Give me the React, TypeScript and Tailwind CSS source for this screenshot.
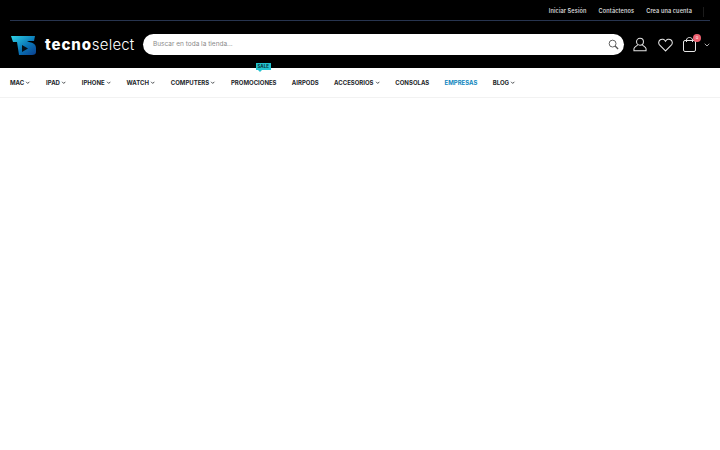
import React from 'react';
import { ChevronDown } from 'lucide-react';

const navItems = [
  { label: 'MAC', arrow: true },
  { label: 'IPAD', arrow: true },
  { label: 'IPHONE', arrow: true },
  { label: 'WATCH', arrow: true },
  { label: 'COMPUTERS', arrow: true },
  { label: 'PROMOCIONES', sale: true },
  { label: 'AIRPODS' },
  { label: 'ACCESORIOS', arrow: true },
  { label: 'CONSOLAS' },
  { label: 'EMPRESAS', active: true },
  { label: 'BLOG', arrow: true },
];

const Logo = () => (
  <svg className="shrink-0" width="27" height="20" viewBox="0 0 27 20">
    <defs>
      <linearGradient id="logoGrad" x1="0" y1="0" x2="1" y2="1">
        <stop offset="0" stopColor="#2fd3e6" />
        <stop offset="0.55" stopColor="#0a78b8" />
        <stop offset="1" stopColor="#0b3f8f" />
      </linearGradient>
    </defs>
    <path d="M1 1 H25 L24 6 H17 L19 7 Q26 8 26 13 V17 Q26 20 22 20 H9 L7 7 H3 Z" fill="url(#logoGrad)" />
    <path d="M12 10 L18 13.5 L12 17 Z" fill="#041018" />
  </svg>
);

const App: React.FC = () => {
  return (
    <div className="min-h-[450px] bg-white font-['Inter',sans-serif]">
      {/* Header */}
      <header className="h-[68px] bg-black px-[10px]">
        <div className="flex h-[21px] items-center justify-end border-b border-[#27344f] pt-[3px] text-[5.6px] font-semibold text-[#d8d8d8]">
          <span className="tracking-[0.1px]">Iniciar Sesión</span>
          <span className="ml-3 tracking-[0.1px]">Contáctenos</span>
          <span className="ml-3 tracking-[0.1px]">Crea una cuenta</span>
          <span className="ml-[11px] mr-[6px] h-[10px] w-px bg-[#1c1c1c]" />
        </div>
        <div className="mt-[13px] -mr-px flex h-[21px] items-center">
          <Logo />
          <div className="ml-2 flex w-[90px] shrink-0 items-baseline text-[15px] leading-none text-white">
            <span className="font-extrabold tracking-[0.9px]">tecno</span>
            <span className="font-light tracking-[0.2px]">select</span>
          </div>
          <div className="ml-2 flex h-[21px] w-[481px] shrink-0 items-center justify-between rounded-full bg-white pl-[10px] pr-[5px]">
            <span className="text-[6.5px] text-[#8a8a8a]">Buscar en toda la tienda...</span>
            <svg width="11" height="11" viewBox="0 0 24 24" fill="none" stroke="#555" strokeWidth="2">
              <circle cx="10" cy="10" r="7.5" />
              <path d="M15.5 15.5 L22 22" strokeWidth="3" />
            </svg>
          </div>
          <svg className="ml-[9px] shrink-0" width="14" height="15" viewBox="0 0 15 15" fill="none" stroke="#e6e6e6" strokeWidth="1.1">
            <circle cx="7.5" cy="4.5" r="3.7" />
            <path d="M5.2 7.6 C4.6 9 1.2 10 1 12 V14.2 H14 V12 C13.8 10 10.4 9 9.8 7.6" />
          </svg>
          <svg className="ml-[11px] shrink-0" width="15" height="14" viewBox="0 0 24 22" fill="none" stroke="#e6e6e6" strokeWidth="1.7">
            <path d="M12 20.5 L2.8 11.4 C0.2 8.6 0.8 4.4 3.6 2.6 C6.4 0.8 10 1.8 12 5 C14 1.8 17.6 0.8 20.4 2.6 C23.2 4.4 23.8 8.6 21.2 11.4 Z" />
          </svg>
          <div className="relative ml-[10px] h-[15px] w-[13px] shrink-0">
            <svg width="13" height="15" viewBox="0 0 13 15" fill="none" stroke="#e6e6e6" strokeWidth="1">
              <rect x="0.5" y="3.5" width="12" height="11" rx="1.5" />
              <path d="M3.5 5 V3 C3.5 1.4 5 0.5 6.5 0.5 C8 0.5 9.5 1.4 9.5 3 V5" />
            </svg>
            <span className="absolute -top-[3px] left-[10px] flex size-2 items-center justify-center rounded-full bg-[#ee6170] text-[4px] text-white">0</span>
          </div>
          <ChevronDown className="ml-[7px] size-[8px] shrink-0 text-[#cccccc]" strokeWidth={2.5} />
        </div>
      </header>

      {/* Nav */}
      <nav className="flex h-[30px] items-center gap-[15.3px] border-b border-[#f2f2f2] px-[10px] text-[6px] font-bold text-[#222529]">
        {navItems.map((item) => (
          <div key={item.label} className="relative flex items-center">
            <span className={item.active ? 'text-[#0f86bd]' : ''}>{item.label}</span>
            {item.arrow && <ChevronDown className="ml-[1px] size-[5.5px]" strokeWidth={3.5} />}
            {item.sale && (
              <span className="absolute -top-[15px] left-[25px] bg-[#22c3d0] px-[1.5px] text-[4.5px] leading-[7px] text-[#0a2f36]">
                SALE
                <span className="absolute left-[2px] top-[7px] border-x-2 border-t-2 border-x-transparent border-t-[#22c3d0]" />
              </span>
            )}
          </div>
        ))}
      </nav>
    </div>
  );
};

export default App;
